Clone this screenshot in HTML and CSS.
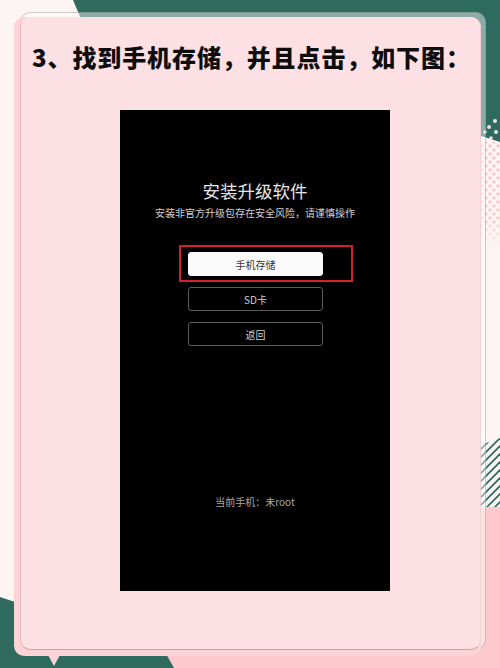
FILE: index.html
```html
<!DOCTYPE html>
<html lang="zh-CN">
<head>
<meta charset="utf-8">
<title>找到手机存储</title>
<link rel="stylesheet" href="styles.css">
</head>
<body>
<div class="page">
  <svg class="bg" width="500" height="668" viewBox="0 0 500 668" aria-hidden="true">
    <defs>
      <pattern id="dots" x="0" y="0" width="8" height="8" patternUnits="userSpaceOnUse">
        <circle cx="2" cy="2" r="1.7" fill="#f6c3c7"/>
        <circle cx="6" cy="6" r="1.7" fill="#f6c3c7"/>
      </pattern>
      <linearGradient id="fade" x1="0" y1="0" x2="0" y2="1">
        <stop offset="0" stop-color="#fff" stop-opacity="1"/>
        <stop offset="0.75" stop-color="#fff" stop-opacity="0.8"/>
        <stop offset="1" stop-color="#fff" stop-opacity="0"/>
      </linearGradient>
      <mask id="fadeMask"><rect x="478" y="142" width="22" height="105" fill="url(#fade)"/></mask>
      <clipPath id="stripeClip"><polygon points="478,446 500,438 500,508 478,508"/></clipPath>
    </defs>
    <rect x="0" y="0" width="500" height="668" fill="#fdf4f4"/>
    <polygon points="73,0 500,0 500,142 478,135 90,40" fill="#2f6a5f"/>
    <g fill="#f3dfe2">
      <circle cx="495" cy="121" r="2"/>
      <circle cx="489" cy="127" r="2"/>
      <circle cx="496" cy="132" r="2"/>
      <circle cx="485" cy="132" r="1.8"/>
      <circle cx="491" cy="138" r="1.8"/>
    </g>
    <rect x="478" y="142" width="22" height="105" fill="url(#dots)" mask="url(#fadeMask)"/>
    <g clip-path="url(#stripeClip)" stroke="#2f6a5f" stroke-width="1.6">
      <line x1="470" y1="460" x2="510" y2="420"/>
      <line x1="470" y1="468" x2="510" y2="428"/>
      <line x1="470" y1="476" x2="510" y2="436"/>
      <line x1="470" y1="484" x2="510" y2="444"/>
      <line x1="470" y1="492" x2="510" y2="452"/>
      <line x1="470" y1="500" x2="510" y2="460"/>
      <line x1="470" y1="508" x2="510" y2="468"/>
      <line x1="470" y1="516" x2="510" y2="476"/>
      <line x1="470" y1="524" x2="510" y2="484"/>
      <line x1="470" y1="532" x2="510" y2="492"/>
      <line x1="470" y1="540" x2="510" y2="500"/>
    </g>
    <rect x="478" y="507" width="22" height="161" fill="#fdc9cc"/>
    <rect x="0" y="648" width="500" height="20" fill="#fdc9cc"/>
    <polygon points="0,597 165,652 174,668 0,668" fill="#2f6a5f"/>
    <polygon points="48,655 60,655 54,666" fill="#fcd3d7"/>
  </svg>

  <div class="stack">
    <div class="card-back"></div>
    <div class="card">
      <h1 class="title">3、找到手机存储，并且点击，如下图：</h1>
      <div class="phone">
        <div class="phone-title">安装升级软件</div>
        <div class="phone-sub">安装非官方升级包存在安全风险，请谨慎操作</div>
        <div class="btns">
          <div class="btn btn-primary">手机存储</div>
          <div class="btn">SD卡</div>
          <div class="btn">返回</div>
        </div>
        <div class="phone-status">当前手机：未root</div>
        <div class="highlight"></div>
      </div>
    </div>
  </div>
</div>
</body>
</html>
```

FILE: styles.css
```css
* { box-sizing: border-box; }

html, body {
  margin: 0;
  padding: 0;
}

body {
  width: 500px;
  height: 668px;
  overflow: hidden;
  font-family: "Noto Sans CJK SC", "Noto Sans", sans-serif;
}

.page {
  position: relative;
  width: 500px;
  height: 668px;
  overflow: hidden;
}

.bg {
  position: absolute;
  left: 0;
  top: 0;
  display: block;
}

.stack {
  position: relative;
  margin: 17px 0 0 14px;
  width: 467px;
  height: 639px;
}

.card-back {
  position: absolute;
  left: 6px;
  top: -5px;
  right: -5px;
  bottom: 6px;
  border-radius: 10px;
  background: rgba(255, 255, 255, 0.45);
  border: 1px solid rgba(120, 110, 110, 0.35);
}

.card {
  position: relative;
  width: 467px;
  height: 639px;
  border-radius: 10px;
  background: #fcd3d7;
  display: flex;
  flex-direction: column;
  overflow: hidden;
}

.card::before {
  content: "";
  position: absolute;
  left: 6px;
  top: 0;
  right: 0;
  bottom: 6px;
  background: #fde0e3;
  border-left: 1px solid #eab8bd;
  border-bottom: 1px solid #d99ba1;
  border-right: 1px solid #f0d2d5;
  border-radius: 8px 10px 10px 10px;
}

.title {
  position: relative;
  margin: 24px 0 0 18px;
  font-size: 24px;
  line-height: 32px;
  font-weight: 900;
  color: #0d0d0d;
  letter-spacing: 0.9px;
  white-space: nowrap;
}

.phone {
  position: relative;
  margin: 37px 0 0 106px;
  width: 270px;
  height: 481px;
  background: #000;
  display: flex;
  flex-direction: column;
  align-items: center;
}

.phone-title {
  margin-top: 70px;
  font-size: 17.5px;
  line-height: 22px;
  color: #e4e4e4;
  font-weight: 400;
}

.phone-sub {
  margin-top: 4px;
  font-size: 10px;
  line-height: 14px;
  color: #d0d0d0;
}

.btns {
  margin-top: 32px;
  display: flex;
  flex-direction: column;
  gap: 11px;
  margin-left: 1px;
}

.btn {
  width: 135px;
  height: 24px;
  border: 1px solid #5c5c5c;
  border-radius: 3px;
  display: flex;
  align-items: center;
  justify-content: center;
  font-size: 10px;
  color: #d2d2d2;
}

.btn-primary {
  background: #fafafa;
  border-color: #fafafa;
  color: #333;
}

.phone-status {
  margin-top: 149px;
  font-size: 10px;
  line-height: 14px;
  color: #a8a8a8;
}

.highlight {
  position: absolute;
  left: 59px;
  top: 135px;
  width: 174px;
  height: 37px;
  border: 2px solid #d1222b;
}
```
